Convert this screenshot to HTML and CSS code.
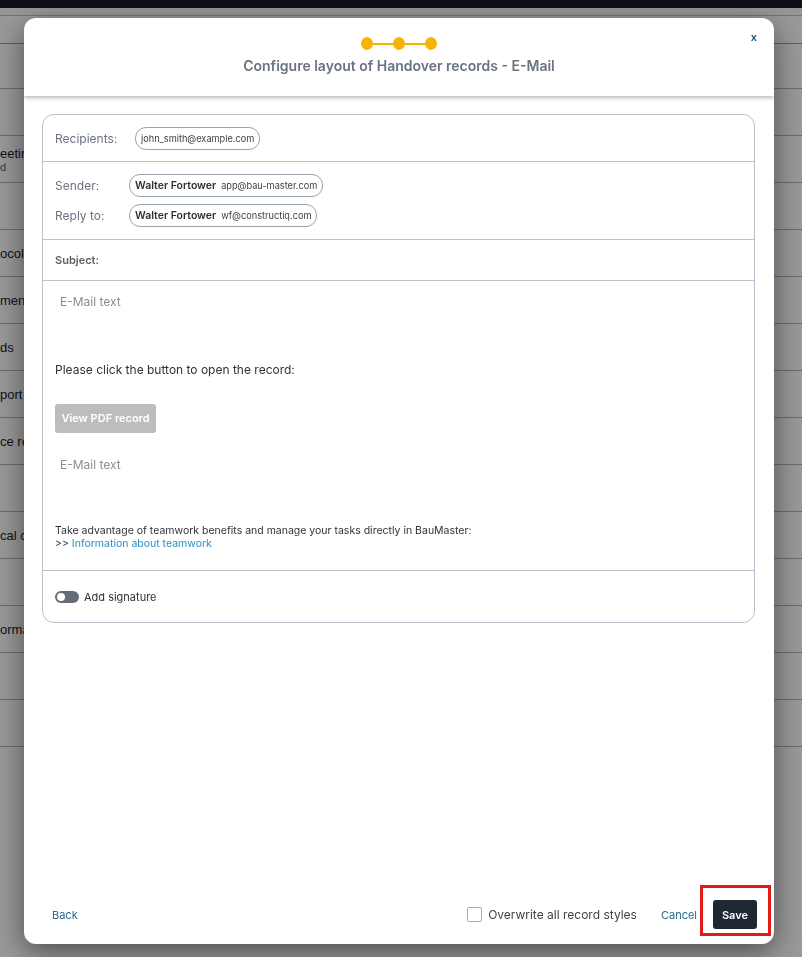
FILE: index.html
```html
<!DOCTYPE html>
<html lang="en">

<head>
  <meta charset="UTF-8">
  <meta name="viewport" content="width=device-width, initial-scale=1.0">
  <title>Configure layout of Handover records - E-Mail</title>
  <link rel="stylesheet" href="styles.css">
</head>

<body>
  <div class="page">
    <div class="topbar"></div>
    <div class="toolbar"></div>
    <div class="subbar"></div>
    <ul class="list">
      <li></li>
      <li><span>eeting</span><small>d</small></li>
      <li></li>
      <li><span>ocol</span></li>
      <li><span>ment</span></li>
      <li><span>ds</span></li>
      <li><span>port</span></li>
      <li><span>ce rec</span></li>
      <li></li>
      <li><span>cal c</span></li>
      <li></li>
      <li><span>ormat</span></li>
      <li></li>
      <li></li>
    </ul>
  </div>

  <div class="overlay">
    <div class="modal">
      <div class="modal-header">
        <div class="steps">
          <span class="dot"></span><span class="bar"></span><span class="dot"></span><span class="bar"></span><span class="dot"></span>
        </div>
        <h1 class="modal-title">Configure layout of Handover records - E-Mail</h1>
        <button class="close">x</button>
      </div>

      <div class="modal-body">
        <div class="mail-card">
          <div class="mail-row recipients">
            <span class="label wide">Recipients:</span>
            <span class="chip">john_smith@example.com</span>
          </div>

          <div class="mail-row senders">
            <div class="line">
              <span class="label">Sender:</span>
              <span class="chip"><b>Walter Fortower</b>app@bau-master.com</span>
            </div>
            <div class="line">
              <span class="label">Reply to:</span>
              <span class="chip"><b>Walter Fortower</b>wf@constructiq.com</span>
            </div>
          </div>

          <div class="mail-row subject">
            <span class="subject-label">Subject:</span>
          </div>

          <div class="mail-text">
            <p class="placeholder">E-Mail text</p>
            <p class="open-hint">Please click the button to open the record:</p>
            <span class="pdf-button">View PDF record</span>
            <p class="placeholder second">E-Mail text</p>
            <p class="teamwork">Take advantage of teamwork benefits and manage your tasks directly in BauMaster:<br>&gt;&gt; <a href="#">Information about teamwork</a></p>
          </div>

          <div class="mail-row signature">
            <span class="toggle"></span>
            <span>Add signature</span>
          </div>
        </div>
      </div>

      <div class="modal-footer">
        <a href="#" class="link">Back</a>
        <div class="actions">
          <label class="check"><span class="box"></span>Overwrite all record styles</label>
          <a href="#" class="link">Cancel</a>
          <button class="save">Save</button>
        </div>
      </div>
    </div>
  </div>
</body>

</html>
```

FILE: styles.css
```css
html,
body {
  margin: 0;
  height: 100%;
  overflow: hidden;
  font-family: "Liberation Sans", Arial, sans-serif;
  background: #fff;
}

.page {
  height: 100%;
}

.topbar {
  height: 8px;
  background: #151b25;
}

.toolbar {
  height: 7px;
  border-bottom: 1px solid #c2c6cc;
  background: #fbfbfc;
}

.subbar {
  height: 27px;
  border-bottom: 1px solid #9ba1a9;
  background: #fff;
}

.list {
  list-style: none;
  margin: 44px 0 0 0;
  padding: 0;
}

.list li {
  height: 46px;
  border-bottom: 1px solid #aeb5bf;
  display: flex;
  flex-direction: column;
  justify-content: center;
  font-size: 13px;
  color: #222;
  white-space: nowrap;
}

.list li:first-child {
  border-top: 1px solid #aeb5bf;
}

.list small {
  font-size: 11px;
  color: #1f6aa8;
}

.overlay {
  position: fixed;
  inset: 0;
  background: rgba(0, 0, 0, 0.4);
  font-family: Inter, "Noto Sans", sans-serif;
}

.modal {
  margin: 18px 0 0 24px;
  width: 750px;
  height: 926px;
  background: #fff;
  border-radius: 12px;
  box-shadow: rgba(0, 0, 0, 0.5) 0px 8px 30px;
  display: flex;
  flex-direction: column;
  overflow: hidden;
}

.modal-header {
  position: relative;
  height: 78px;
  flex-shrink: 0;
  display: flex;
  flex-direction: column;
  align-items: center;
  box-shadow: rgba(0, 0, 0, 0.28) 0px 2px 4px;
  z-index: 1;
}

.steps {
  display: flex;
  align-items: center;
  margin-top: 19px;
}

.dot {
  width: 12px;
  height: 13px;
  border-radius: 50%;
  background: #f6b400;
}

.bar {
  width: 20px;
  height: 2px;
  background: #f6b400;
}

.modal-title {
  margin: 7px 0 0 0;
  font-size: 14px;
  font-weight: 600;
  color: #6b7380;
}

.close {
  position: absolute;
  top: 12px;
  right: 17px;
  border: none;
  background: none;
  padding: 0;
  font-family: Inter, sans-serif;
  font-size: 11px;
  font-weight: 600;
  color: #1d5878;
  cursor: pointer;
}

.modal-body {
  flex: 1;
  padding: 18px 19px 0 18px;
}

.mail-card {
  border: 1px solid #b8c1cc;
  border-radius: 12px;
}

.mail-row {
  display: flex;
  align-items: center;
  padding: 0 12px;
  border-bottom: 1px solid #b8c1cc;
  font-size: 12px;
  color: #6b7280;
}

.recipients {
  height: 46px;
}

.senders {
  flex-direction: column;
  align-items: stretch;
  gap: 7px;
  padding-top: 12px;
  padding-bottom: 12px;
}

.senders .line {
  display: flex;
  align-items: center;
}

.label {
  width: 74px;
  flex-shrink: 0;
}

.label.wide {
  width: 80px;
}

.chip {
  display: inline-flex;
  align-items: center;
  gap: 5px;
  height: 21px;
  padding: 0 5px;
  border: 1px solid #9aa3ae;
  border-radius: 11px;
  font-size: 9.2px;
  color: #3b3f45;
}

.chip b {
  font-size: 10.5px;
  font-weight: 600;
  color: #2b2f35;
}

.subject {
  height: 40px;
}

.subject-label {
  font-size: 11px;
  font-weight: 600;
  color: #5a6068;
}

.mail-text {
  height: 289px;
  padding: 0 12px;
  border-bottom: 1px solid #b8c1cc;
}

.mail-text p {
  margin: 0;
}

.placeholder {
  padding: 13px 0 0 5px;
  font-size: 12px;
  color: #8a8d92;
}

.open-hint {
  padding-top: 53px;
  font-size: 12px;
  color: #2f3237;
}

.pdf-button {
  display: block;
  margin-top: 27px;
  width: 101px;
  height: 29px;
  line-height: 29px;
  text-align: center;
  border-radius: 3px;
  background: #bdbdbd;
  color: #fff;
  font-size: 11px;
  font-weight: 600;
}

.placeholder.second {
  padding-top: 24px;
}

.teamwork {
  padding-top: 52px;
  font-size: 10.5px;
  line-height: 13px;
  color: #2f3237;
}

.teamwork a {
  color: #2a8fc8;
  text-decoration: none;
}

.signature {
  height: 51px;
  gap: 5px;
  border-bottom: none;
  font-size: 11px;
  color: #2f3237;
}

.toggle {
  position: relative;
  width: 24px;
  height: 12px;
  border-radius: 6px;
  background: #646c77;
}

.toggle::after {
  content: "";
  position: absolute;
  top: 2px;
  left: 2px;
  width: 8px;
  height: 8px;
  border-radius: 50%;
  background: #fff;
}

.modal-footer {
  display: flex;
  justify-content: space-between;
  align-items: center;
  padding: 0 17px 15px 28px;
  height: 29px;
}

.link {
  font-size: 11px;
  color: #2b6a8e;
  text-decoration: none;
}

.actions {
  display: flex;
  align-items: center;
}

.check {
  display: flex;
  align-items: center;
  gap: 6px;
  margin-right: 24px;
  font-size: 12px;
  color: #3f434a;
}

.box {
  width: 13px;
  height: 13px;
  border: 1px solid #a3acb8;
  border-radius: 2px;
}

.save {
  position: relative;
  margin-left: 16px;
  width: 44px;
  height: 29px;
  border: none;
  border-radius: 3px;
  background: #1f2732;
  color: #fff;
  font-family: Inter, sans-serif;
  font-size: 11px;
  font-weight: 600;
}

.save::after {
  content: "";
  position: absolute;
  top: -15px;
  left: -13px;
  right: -14px;
  bottom: -7px;
  border: 3px solid #e21a1a;
}
```
